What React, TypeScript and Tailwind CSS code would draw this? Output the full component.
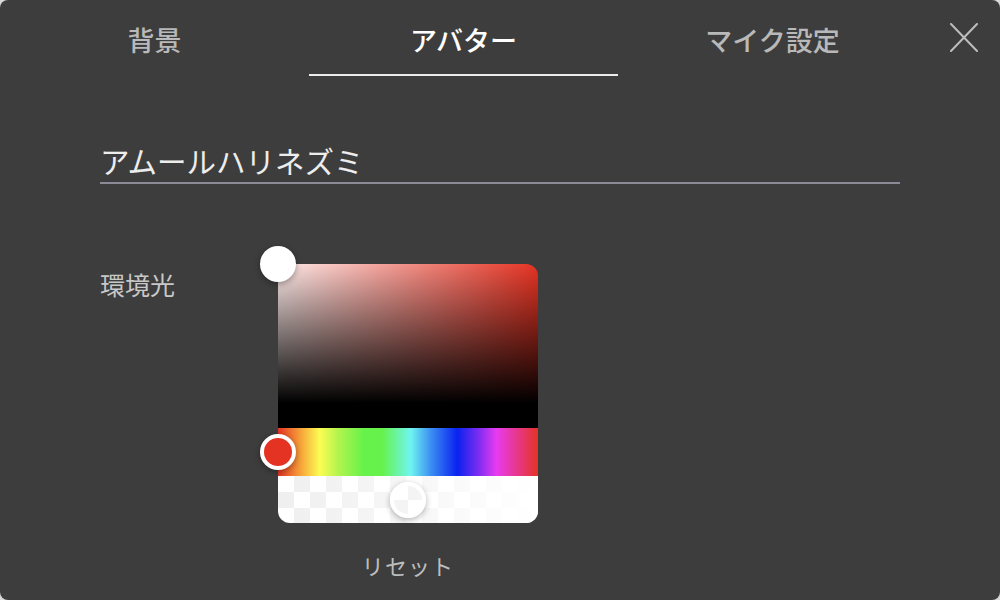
import React from "react"

const tabs = ["背景", "アバター", "マイク設定"]

const App = () => {
  const active = 1
  return (
    <div className="w-[1000px] h-[600px] bg-[#d9d9d9] font-['Noto_Sans_CJK_JP','Noto_Sans',sans-serif]">
      <div className="w-full h-full rounded-lg bg-[#3d3d3d] flex flex-col">
        {/* Tabs */}
        <div className="flex items-start">
          {tabs.map((t, i) => (
            <div
              key={t}
              className={
                i === active
                  ? "w-[309px] h-[76px] pt-[6px] flex items-center justify-center border-b-2 border-[#ececec] text-[27px] font-medium text-white"
                  : "w-[309px] h-[76px] pt-[6px] flex items-center justify-center border-b-2 border-transparent text-[27px] font-medium text-[#b9b9b9]"
              }
            >
              {t}
            </div>
          ))}
          <button className="ml-[22px] mt-[23px] w-[30px] h-[30px] text-[#bdbdbd]">
            <svg viewBox="0 0 30 30" width="30" height="30" fill="none" stroke="currentColor" strokeWidth="2" strokeLinecap="round">
              <path d="M2 1 L28 28 M28 1 L2 28" />
            </svg>
          </button>
        </div>

        {/* Name */}
        <div className="mx-[100px] mt-[62px] h-[46px] leading-[44px] border-b-2 border-[#8a8b96] text-[29.5px] text-[#ededed]">
          アムールハリネズミ
        </div>

        {/* Ambient light */}
        <div className="flex mt-[80px] ml-[100px]">
          <div className="w-[178px] leading-[40px] text-[25px] text-[#c8c8c8]">環境光</div>
          <div className="flex flex-col items-center">
            <div className="relative w-[260px]">
              <div className="rounded-[12px] overflow-hidden flex flex-col">
                <div className="h-[164px] bg-[linear-gradient(to_bottom,transparent,#000_85%),linear-gradient(to_right,rgba(255,255,255,0.9),rgba(255,255,255,0)),linear-gradient(#e53323,#e53323)]" />
                <div className="h-[48px] bg-[linear-gradient(to_right,#e53323_0%,#f6a63a_9%,#fdfc52_16%,#b4f44e_23%,#66f24a_33%,#66f24c_40%,#6ff5f0_51%,#3a8cf2_59%,#0a22f0_69%,#7a2cf0_77%,#e83bf0_84%,#e53323_100%)]" />
                <div className="relative h-[47px] bg-[repeating-conic-gradient(#efefef_0_25%,#ffffff_0_50%)] bg-[length:32px_32px]">
                  <div className="absolute inset-0 bg-gradient-to-r from-transparent to-white" />
                </div>
              </div>
              {/* thumbs */}
              <div className="absolute left-[-18px] top-[-18px] w-[36px] h-[36px] rounded-full bg-white shadow-[0_2px_6px_rgba(0,0,0,0.35)]" />
              <div className="absolute left-[-18px] top-[170px] w-[36px] h-[36px] rounded-full bg-[#e53323] border-4 border-white shadow-[0_2px_6px_rgba(0,0,0,0.35)]" />
              <div className="absolute left-[112px] top-[218px] w-[36px] h-[36px] rounded-full border-4 border-white bg-[repeating-conic-gradient(#f4f4f4_0_25%,#ffffff_0_50%)] bg-[length:28px_28px] shadow-[0_2px_6px_rgba(0,0,0,0.3)]" />
            </div>
            <div className="mt-[26px] leading-[32px] text-[22px] text-[#bdbdbd] tracking-wider">リセット</div>
          </div>
        </div>
      </div>
    </div>
  )
}

export default App
